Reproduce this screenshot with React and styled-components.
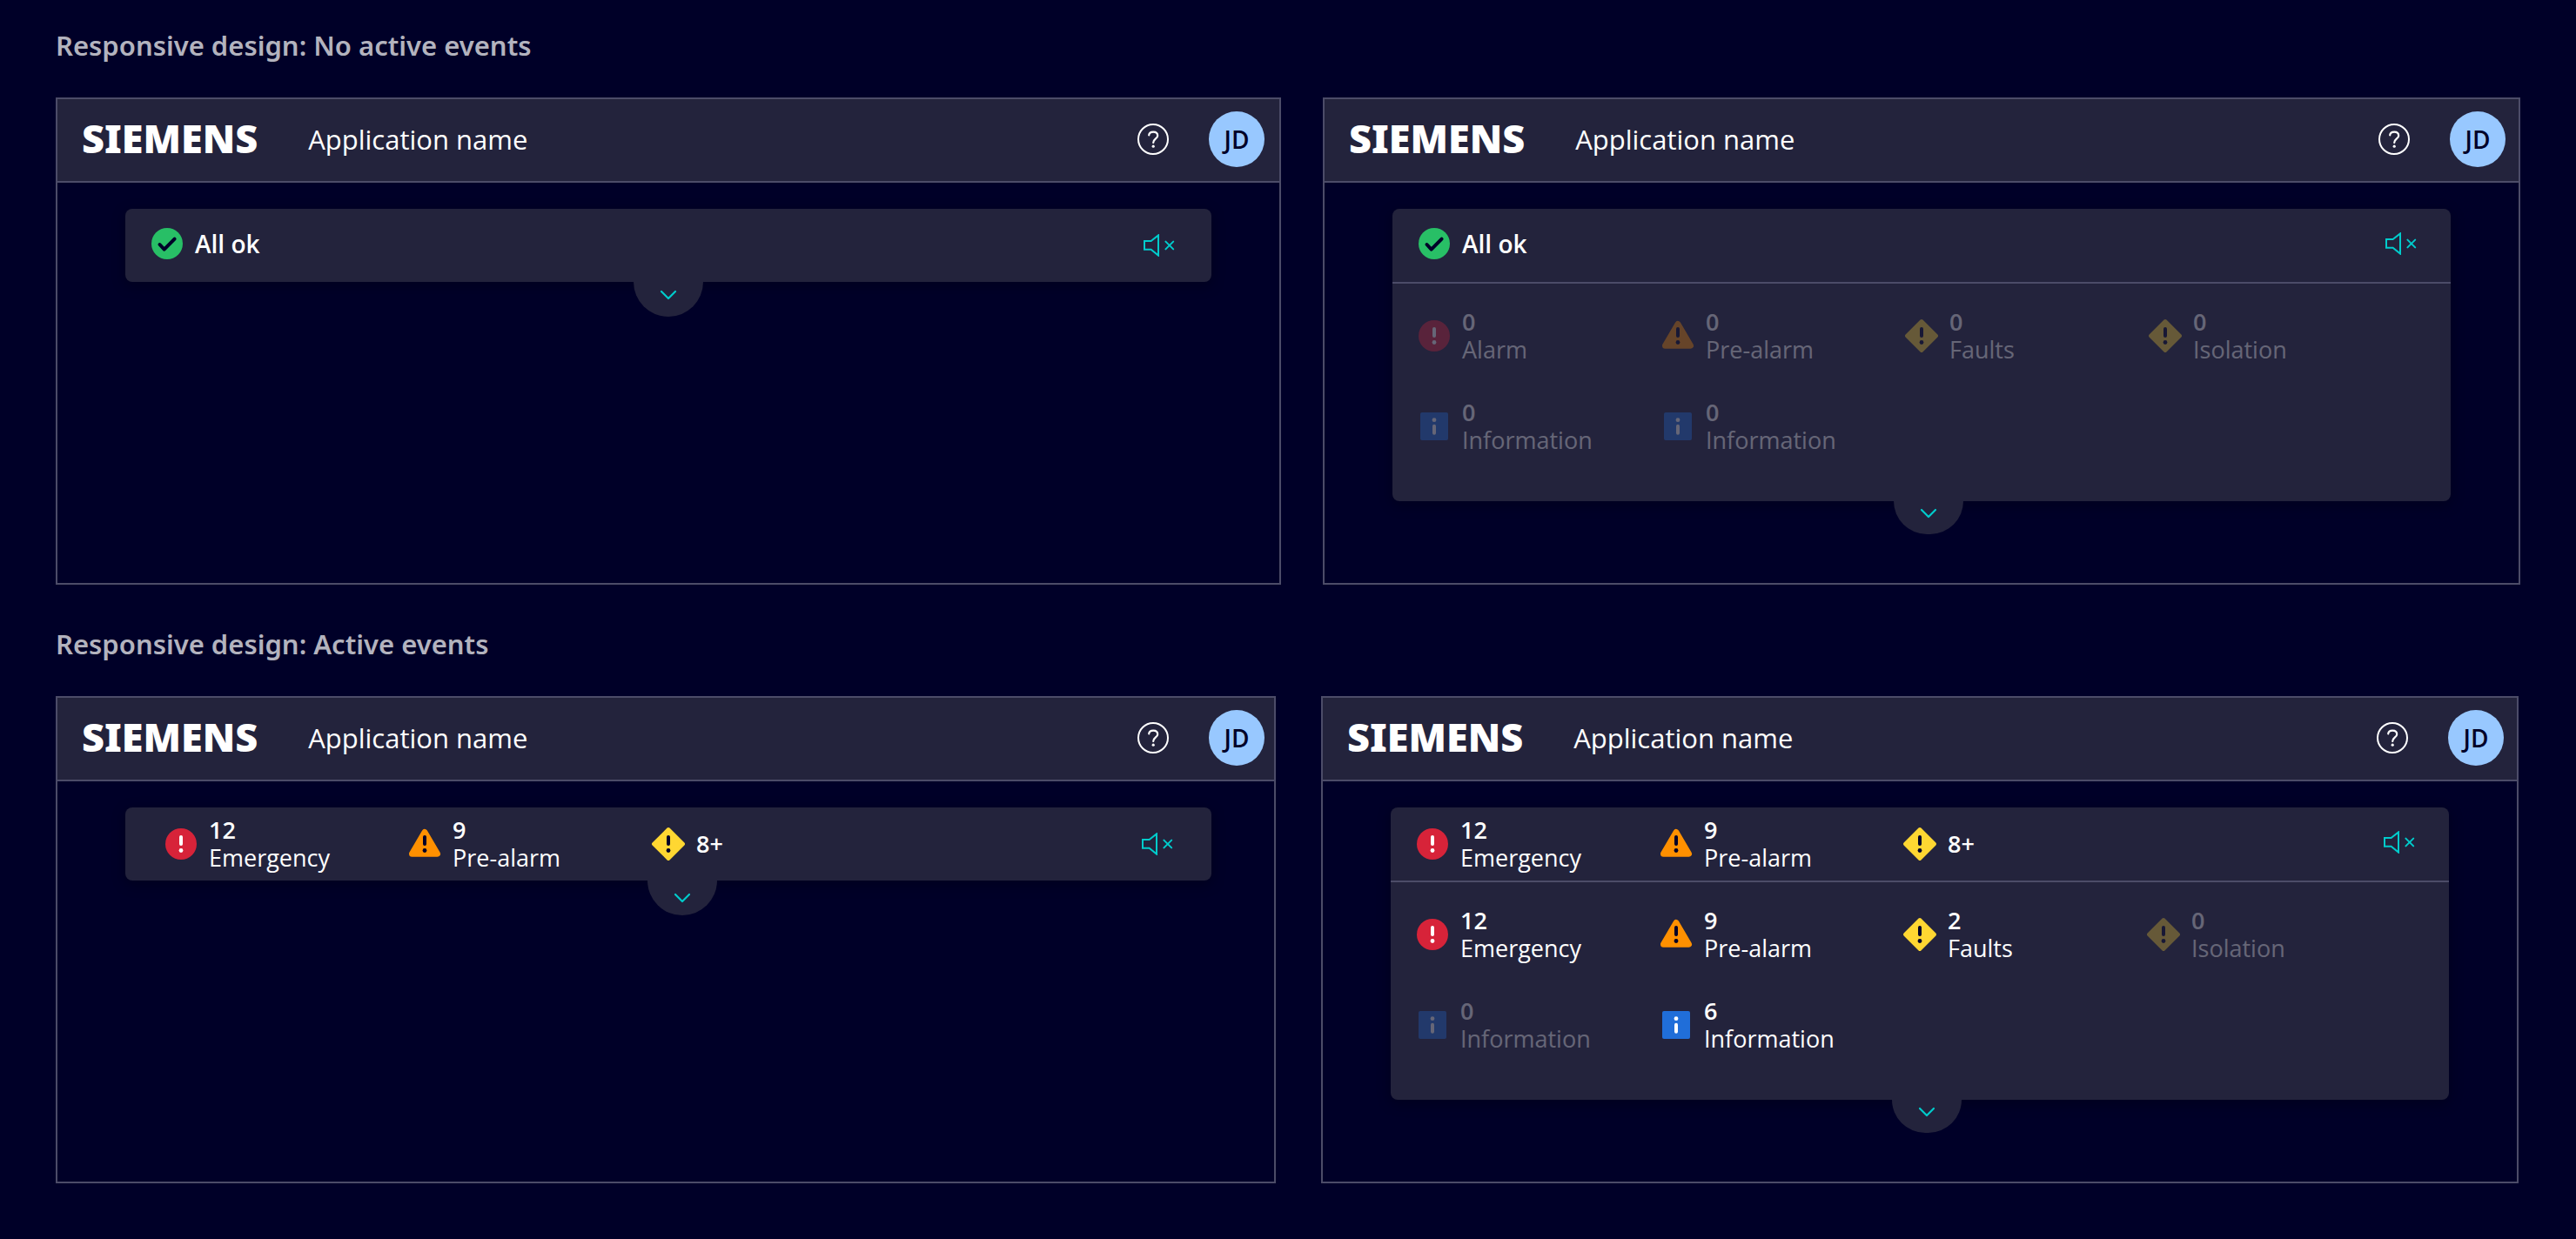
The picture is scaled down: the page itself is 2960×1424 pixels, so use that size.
import React from "react";
import styled, { createGlobalStyle } from "styled-components";

const color = {
  page: "#000028",
  surface: "#23233c",
  border: "#4c4c68",
  text: "#ffffff",
  heading: "#b3b3be",
  action: "#00cccc",
  avatar: "#98c8ff",
};

const GlobalStyle = createGlobalStyle`
  *, *::before, *::after { box-sizing: border-box; }
  body {
    margin: 0;
    background: ${color.page};
    color: ${color.text};
    font-family: "Open Sans", "Noto Sans", sans-serif;
    font-size: 27px;
    line-height: 32px;
  }
`;

const Page = styled.main`
  display: flex;
  flex-direction: column;
  gap: 48px;
  padding: 32px 64px 64px;
`;

const Section = styled.section`
  display: flex;
  flex-direction: column;
  gap: 40px;
`;

const SectionTitle = styled.h2`
  margin: 0;
  color: ${color.heading};
  font-family: "Noto Sans", sans-serif;
  font-size: 31px;
  font-weight: 600;
  line-height: 40px;
`;

const Frames = styled.div`
  display: grid;
  grid-template-columns: minmax(0, ${(p) => p.$left}fr) minmax(0, 1376fr);
  gap: ${(p) => p.$gap}px;
  padding-right: ${(p) => p.$inset}px;
`;

const Frame = styled.article`
  display: flex;
  flex-direction: column;
  border: 2px solid ${color.border};
`;

const Header = styled.header`
  display: flex;
  align-items: center;
  gap: 40px;
  padding: 14px ${(p) => p.$end}px 16px 28px;
  background: ${color.surface};
  border-bottom: 2px solid ${color.border};
`;

const Logo = styled.span`
  margin-right: 18px;
  padding-bottom: 2px;
  font-family: "Noto Sans", sans-serif;
  font-size: 45px;
  font-weight: 900;
  line-height: 48px;
`;

const AppName = styled.span`
  flex: 1;
  font-size: 31px;
  line-height: 40px;
`;

const PlainButton = styled.button`
  display: flex;
  flex: none;
  align-items: center;
  justify-content: center;
  margin: 0;
  padding: 0;
  border: 0;
  background: none;
  color: inherit;
  font: inherit;
  cursor: pointer;
`;

const Avatar = styled(PlainButton)`
  width: 64px;
  height: 64px;
  border-radius: 50%;
  background: ${color.avatar};
  color: ${color.page};
  font-size: 28px;
  font-weight: 600;
`;

const Content = styled.div`
  display: flex;
  flex-direction: column;
  padding: 30px ${(p) => p.$end}px 56px 78px;
`;

const Card = styled.div`
  border-radius: 8px;
  background: ${color.surface};
  box-shadow: 0 4px 16px rgba(0, 0, 8, 0.3);
`;

const Summary = styled.div`
  display: flex;
  align-items: center;
  justify-content: space-between;
  min-height: 84px;
  padding: 0 ${(p) => p.$end}px 0 ${(p) => p.$start}px;
`;

const Status = styled.div`
  display: flex;
  align-items: center;
  gap: 8px;
  padding-bottom: 4px;
  font-size: 28px;
  font-weight: 600;
`;

const MuteButton = styled(PlainButton)`
  padding-bottom: ${(p) => (p.$raised ? 4 : 0)}px;
  color: ${color.action};
`;

const EventGrid = styled.ul`
  display: grid;
  grid-template-columns: repeat(${(p) => p.$columns}, 280px);
  row-gap: 40px;
  margin: 0;
  padding: 0;
  list-style: none;
`;

const Details = styled.div`
  padding: 28px 24px 54px;
  border-top: 2px solid ${color.border};
`;

const EventItem = styled.li`
  display: flex;
  align-items: center;
  gap: 8px;
  opacity: ${(p) => (p.$muted ? 0.3 : 1)};
`;

const EventText = styled.div`
  display: flex;
  flex-direction: column;
`;

const Count = styled.strong`
  font-weight: 600;
`;

const TabRow = styled.div`
  display: flex;
  justify-content: center;
  padding-left: ${(p) => p.$shift}px;
`;

const Tab = styled(PlainButton)`
  align-items: flex-start;
  width: 80px;
  height: ${(p) => p.$height}px;
  padding-top: ${(p) => p.$drop}px;
  border-radius: 0 0 40px 40px;
  background: ${color.surface};
  color: ${color.action};
`;

const Icon = styled.svg`
  display: block;
  flex: none;
`;

const Exclamation = ({ fill }) => (
  <g fill={fill}>
    <rect x="22" y="14" width="4" height="12" rx="2" />
    <circle cx="24" cy="31.5" r="2.4" />
  </g>
);

const shapes = {
  ok: (
    <>
      <circle cx="24" cy="24" r="18" fill="#28bf66" />
      <path
        d="M15.5 25l5.2 5.6L32.6 18.6"
        fill="none"
        stroke="#000028"
        strokeWidth="4"
        strokeLinecap="round"
        strokeLinejoin="round"
      />
    </>
  ),
  alarm: (
    <>
      <circle cx="24" cy="24" r="18" fill="#d72339" />
      <Exclamation fill="#fff" />
    </>
  ),
  warning: (
    <>
      <path
        d="M24 10.5L38.5 35.2H9.5Z"
        fill="#ff9000"
        stroke="#ff9000"
        strokeWidth="7"
        strokeLinejoin="round"
      />
      <Exclamation fill="#000028" />
    </>
  ),
  fault: (
    <>
      <path
        d="M24 7L41 24L24 41L7 24Z"
        fill="#ffd732"
        stroke="#ffd732"
        strokeWidth="4"
        strokeLinejoin="round"
      />
      <Exclamation fill="#000028" />
    </>
  ),
  info: (
    <>
      <rect x="8" y="8" width="32" height="32" rx="2" fill="#206ed9" />
      <g fill="#fff">
        <circle cx="24" cy="16.7" r="2.4" />
        <rect x="22" y="21.7" width="4" height="12" rx="2" />
      </g>
    </>
  ),
};

const StatusIcon = ({ kind }) => (
  <Icon width="48" height="48" viewBox="0 0 48 48" aria-hidden="true">
    {shapes[kind]}
  </Icon>
);

const HelpIcon = () => (
  <Icon width="48" height="48" viewBox="0 0 48 48" fill="none" stroke="currentColor" aria-hidden="true">
    <circle cx="24" cy="24" r="17" strokeWidth="2" />
    <path
      d="M19.2 19.4C19.4 16.8 21.2 15.6 24.2 15.6C27.2 15.6 29.2 17.4 29.2 20C29.2 23.4 24.2 23.6 24.2 28"
      strokeWidth="2.2"
      strokeLinecap="round"
    />
    <circle cx="24.2" cy="32.2" r="1.6" fill="currentColor" stroke="none" />
  </Icon>
);

const MuteIcon = () => (
  <Icon width="36" height="26" viewBox="0 0 36 26" fill="none" stroke="currentColor" strokeWidth="2" aria-hidden="true">
    <path d="M1 8H8.6L17 1.4V24.6L8.6 17.7H1Z" />
    <path d="M25.4 8.6L34.2 17.4M34.2 8.6L25.4 17.4" strokeLinecap="round" />
  </Icon>
);

const ChevronIcon = () => (
  <Icon width="20" height="12" viewBox="0 0 20 12" fill="none" stroke="currentColor" aria-hidden="true">
    <path d="M2 2L10 10L18 2" strokeWidth="2.2" strokeLinecap="round" strokeLinejoin="round" />
  </Icon>
);

const topEvents = [
  { kind: "alarm", count: "12", label: "Emergency" },
  { kind: "warning", count: "9", label: "Pre-alarm" },
  { kind: "fault", count: "8+" },
];

const quietEvents = [
  { kind: "alarm", count: "0", label: "Alarm" },
  { kind: "warning", count: "0", label: "Pre-alarm" },
  { kind: "fault", count: "0", label: "Faults" },
  { kind: "fault", count: "0", label: "Isolation" },
  { kind: "info", count: "0", label: "Information" },
  { kind: "info", count: "0", label: "Information" },
];

const activeEvents = [
  { kind: "alarm", count: "12", label: "Emergency" },
  { kind: "warning", count: "9", label: "Pre-alarm" },
  { kind: "fault", count: "2", label: "Faults" },
  { kind: "fault", count: "0", label: "Isolation" },
  { kind: "info", count: "0", label: "Information" },
  { kind: "info", count: "6", label: "Information" },
];

const Events = ({ items, columns }) => (
  <EventGrid $columns={columns}>
    {items.map((item, i) => (
      <EventItem key={i} $muted={item.count === "0"}>
        <StatusIcon kind={item.kind} />
        <EventText>
          <Count>{item.count}</Count>
          {item.label && <span>{item.label}</span>}
        </EventText>
      </EventItem>
    ))}
  </EventGrid>
);

const Panel = ({
  summary,
  details,
  headerEnd = 15,
  contentEnd = 78,
  summaryStart = 24,
  summaryEnd = 39,
  tabShift = 0,
  tabDrop = 9,
}) => (
  <Frame>
    <Header $end={headerEnd}>
      <Logo>SIEMENS</Logo>
      <AppName>Application name</AppName>
      <PlainButton type="button" aria-label="Help">
        <HelpIcon />
      </PlainButton>
      <Avatar type="button">JD</Avatar>
    </Header>
    <Content $end={contentEnd}>
      <Card>
        <Summary $start={summaryStart} $end={summaryEnd}>
          {summary ? (
            <Events items={summary} columns={3} />
          ) : (
            <Status>
              <StatusIcon kind="ok" />
              All ok
            </Status>
          )}
          <MuteButton type="button" aria-label="Mute" $raised={Boolean(details)}>
            <MuteIcon />
          </MuteButton>
        </Summary>
        {details && (
          <Details>
            <Events items={details} columns={4} />
          </Details>
        )}
      </Card>
      <TabRow $shift={tabShift}>
        <Tab type="button" aria-label="Toggle details" $height={details ? 38 : 40} $drop={tabDrop}>
          <ChevronIcon />
        </Tab>
      </TabRow>
    </Content>
  </Frame>
);

export default function App() {
  return (
    <>
      <GlobalStyle />
      <Page>
        <Section>
          <SectionTitle>Responsive design: No active events</SectionTitle>
          <Frames $left={1408} $gap={48} $inset={0}>
            <Panel headerEnd={17} summaryEnd={42} />
            <Panel details={quietEvents} tabShift={16} tabDrop={8} />
          </Frames>
        </Section>
        <Section>
          <SectionTitle>Responsive design: Active events</SectionTitle>
          <Frames $left={1402} $gap={52} $inset={2}>
            <Panel
              summary={topEvents}
              headerEnd={11}
              contentEnd={72}
              summaryStart={40}
              summaryEnd={44}
              tabShift={32}
              tabDrop={14}
            />
            <Panel summary={topEvents} details={activeEvents} tabShift={16} tabDrop={8} />
          </Frames>
        </Section>
      </Page>
    </>
  );
}
